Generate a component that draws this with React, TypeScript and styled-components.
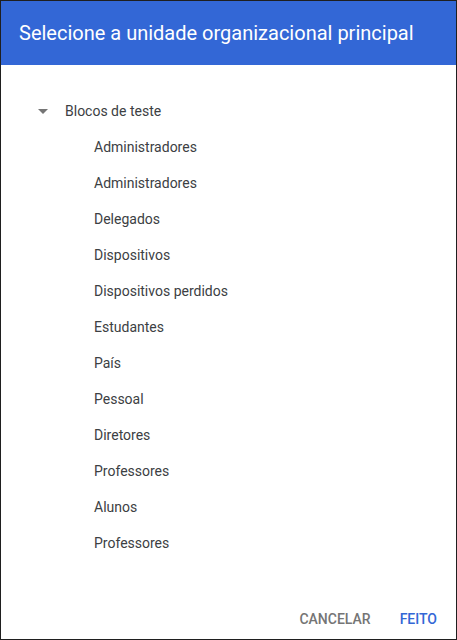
import React from 'react';
import styled, { createGlobalStyle } from 'styled-components';

const GlobalStyle = createGlobalStyle`
  html, body {
    margin: 0;
    padding: 0;
    background: #fff;
  }
  body {
    font-family: Roboto, 'Liberation Sans', Arial, sans-serif;
  }
`;

const Dialog = styled.div`
  width: 457px;
  height: 640px;
  box-sizing: border-box;
  border: 1px solid #1f1f1f;
  display: flex;
  flex-direction: column;
  background: #fff;
`;

const Header = styled.div`
  height: 64px;
  background: #3367d6;
  display: flex;
  align-items: center;
  padding: 0 18px;
  flex-shrink: 0;
`;

const Title = styled.h1`
  margin: 0;
  color: #fff;
  font-size: 20px;
  font-weight: 400;
  letter-spacing: 0;
`;

const Body = styled.div`
  flex: 1;
  padding-top: 28px;
`;

const Row = styled.div<{ $level: number }>`
  height: 36px;
  display: flex;
  align-items: center;
  padding-left: ${(p) => (p.$level === 0 ? 36 : 93)}px;
  font-size: 14px;
  color: #3c4043;
`;

const Caret = styled.span`
  width: 12px;
  height: 12px;
  margin-right: 16px;
  display: flex;
  align-items: center;
  justify-content: center;
`;

const Footer = styled.div`
  display: flex;
  justify-content: flex-end;
  gap: 13px;
  padding: 0 11px 2px 0;
`;

const Button = styled.button<{ $primary?: boolean }>`
  height: 36px;
  padding: 0 8px;
  border: none;
  background: none;
  font-family: Roboto, 'Liberation Sans', Arial, sans-serif;
  font-size: 14px;
  font-weight: 500;
  text-transform: uppercase;
  color: ${(p) => (p.$primary ? '#3367d6' : '#757575')};
  cursor: pointer;
`;

const children = [
  'Administradores',
  'Administradores',
  'Delegados',
  'Dispositivos',
  'Dispositivos perdidos',
  'Estudantes',
  'País',
  'Pessoal',
  'Diretores',
  'Professores',
  'Alunos',
  'Professores',
];

export default function App() {
  return (
    <>
      <GlobalStyle />
      <Dialog>
        <Header>
          <Title>Selecione a unidade organizacional principal</Title>
        </Header>
        <Body>
          <Row $level={0}>
            <Caret>
              <svg width="10" height="5" viewBox="0 0 10 5">
                <path d="M0 0 L10 0 L5 5 Z" fill="#757575" />
              </svg>
            </Caret>
            Blocos de teste
          </Row>
          {children.map((name, i) => (
            <Row key={i} $level={1}>
              {name}
            </Row>
          ))}
        </Body>
        <Footer>
          <Button>Cancelar</Button>
          <Button $primary>Feito</Button>
        </Footer>
      </Dialog>
    </>
  );
}
